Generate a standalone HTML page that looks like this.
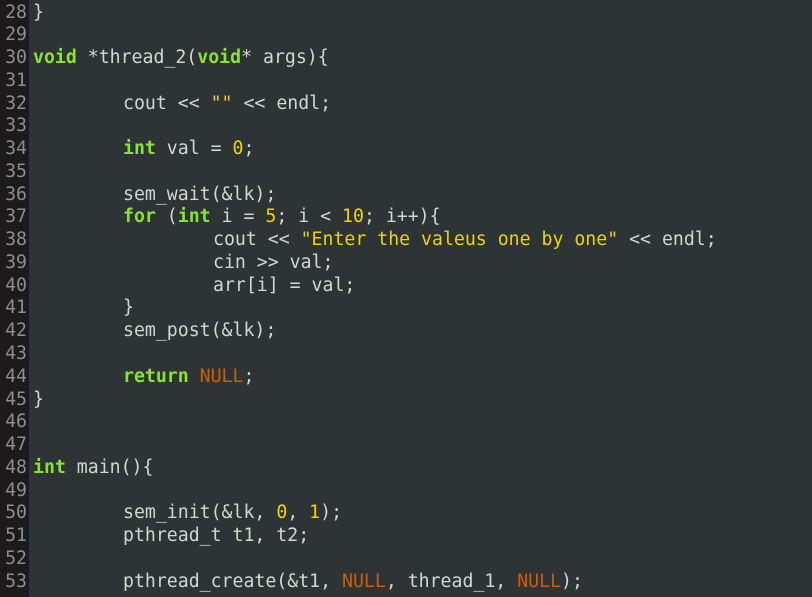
<!DOCTYPE html>
<html><head><style>
html,body{margin:0;padding:0;width:812px;height:597px;overflow:hidden;background:#2e3436;}
.g{position:absolute;left:0;top:0;width:29px;height:597px;background:#1d1a1c;}
pre{position:absolute;top:1.5px;margin:0;font-family:"DejaVu Sans Mono","Liberation Mono",monospace;font-size:18.2px;line-height:22.76px;white-space:pre;}
.n{left:0;width:27px;text-align:right;color:#8a8f8c;}
.c{left:33px;color:#d3d7cf;}
i{font-style:normal;display:inline-block;width:90px;}
b{color:#8ae234;font-weight:bold;}
.s{color:#edd400;}
.o{color:#ce5c00;}
</style></head><body>
<div class="g"></div>
<pre class="n">28
29
30
31
32
33
34
35
36
37
38
39
40
41
42
43
44
45
46
47
48
49
50
51
52
53</pre>
<pre class="c">}

<b>void</b> *thread_2(<b>void</b>* args){

<i></i>cout &lt;&lt; <span class="s">""</span> &lt;&lt; endl;

<i></i><b>int</b> val = <span class="s">0</span>;

<i></i>sem_wait(&amp;lk);
<i></i><b>for</b> (<b>int</b> i = <span class="s">5</span>; i &lt; <span class="s">10</span>; i++){
<i></i><i></i>cout &lt;&lt; <span class="s">"Enter the valeus one by one"</span> &lt;&lt; endl;
<i></i><i></i>cin &gt;&gt; val;
<i></i><i></i>arr[i] = val;
<i></i>}
<i></i>sem_post(&amp;lk);

<i></i><b>return</b> <span class="o">NULL</span>;
}


<b>int</b> main(){

<i></i>sem_init(&amp;lk, <span class="s">0</span>, <span class="s">1</span>);
<i></i>pthread_t t1, t2;

<i></i>pthread_create(&amp;t1, <span class="o">NULL</span>, thread_1, <span class="o">NULL</span>);</pre>
</body></html>
